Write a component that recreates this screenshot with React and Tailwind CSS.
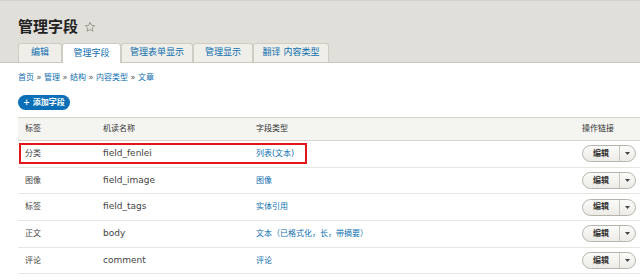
import React from "react";

const font = { fontFamily: '"DejaVu Sans", "Noto Sans CJK SC", sans-serif' };

function Tab({ label, active, w }) {
  return (
    <div
      className={`flex items-center justify-center rounded-t-[3px] border border-b-0 text-[9px] ${
        active ? "bg-white border-[#cfccc4] relative top-[1px] h-[20px]" : "bg-[#efeee9] border-[#cfccc4] h-[19px]"
      } ${w} text-[#0d6eb0]`}
    >
      {label}
    </div>
  );
}

function ActionBtn() {
  return (
    <div className="flex h-[17px] w-[54px] items-center rounded-full border border-[#b5b3ab] bg-gradient-to-b from-[#fbfbf9] to-[#ecebe6] text-[8px] text-[#333]">
      <div className="flex flex-1 items-center justify-center font-bold border-r border-[#c8c6bf] h-full">编辑</div>
      <div className="flex w-[15px] items-center justify-center h-full">
        <svg width="5" height="3" viewBox="0 0 5 3"><path d="M0 0h5L2.5 3z" fill="#444" /></svg>
      </div>
    </div>
  );
}

const rows = [
  ["分类", "field_fenlei", "列表(文本)", true],
  ["图像", "field_image", "图像"],
  ["标签", "field_tags", "实体引用"],
  ["正文", "body", "文本（已格式化，长，带摘要）"],
  ["评论", "comment", "评论"],
];

export default function App() {
  return (
    <div className="w-[640px] h-[280px] overflow-hidden bg-white" style={font}>
      <div className="bg-[#e1dfd9] border-t border-[#d3d1cb] border-b border-b-[#c9c7c0] h-[63px] flex flex-col">
        <div className="flex gap-[6px] pl-[18px] pt-[16px] items-start">
          <span className="text-[15px] font-bold text-[#222] leading-[20px]">管理字段</span>
          <svg width="12" height="12" viewBox="0 0 24 24" className="mt-[4px]">
            <path d="M12 2.5l2.9 6.2 6.6.7-5 4.5 1.4 6.6L12 17.1l-5.9 3.4 1.4-6.6-5-4.5 6.6-.7z" fill="none" stroke="#8a8880" strokeWidth="1.6" strokeLinejoin="round" />
          </svg>
        </div>
        <div className="flex items-end pl-[18px] mt-auto">
          <Tab label="编辑" w="w-[44px]" />
          <Tab label="管理字段" w="w-[59px]" active />
          <Tab label="管理表单显示" w="w-[72px]" />
          <Tab label="管理显示" w="w-[60px]" />
          <Tab label="翻译 内容类型" w="w-[76px]" />
        </div>
      </div>
      <div className="pl-[18px] pt-[9px] text-[8px] text-[#0d6eb0] leading-[12px]">
        首页 <span className="text-[#555]">»</span> 管理 <span className="text-[#555]">»</span> 结构 <span className="text-[#555]">»</span> 内容类型 <span className="text-[#555]">»</span> 文章
      </div>
      <div className="flex pl-[18px] mt-[11px]">
        <div className="flex h-[15px] w-[52px] items-center justify-center rounded-full bg-[#0a6fb6] text-[8px] font-bold text-white">
          + 添加字段
        </div>
      </div>
      <div className="ml-[18px] mt-[7px]">
        <div className="grid grid-cols-[85px_153px_1fr_58px] h-[24px] items-center border-t border-b border-[#d6d4cd] bg-[#f4f4f1] text-[8px] text-[#333]">
          <div className="pl-[7px]">标签</div>
          <div>机读名称</div>
          <div>字段类型</div>
          <div>操作链接</div>
        </div>
        {rows.map(([a, b, c, hl]) => (
          <div key={b} className="relative grid grid-cols-[85px_153px_1fr_58px] h-[26.7px] items-center border-b border-[#e6e5e0] text-[8px]">
            {hl && <div className="absolute left-[1px] top-[2px] w-[288px] h-[21px] border-2 border-[#e4141b]" />}
            <div className="pl-[7px] text-[#444]">{a}</div>
            <div className="text-[#444] text-[9px]">{b}</div>
            <div className="text-[#0d6eb0]">{c}</div>
            <div><ActionBtn /></div>
          </div>
        ))}
      </div>
    </div>
  );
}
